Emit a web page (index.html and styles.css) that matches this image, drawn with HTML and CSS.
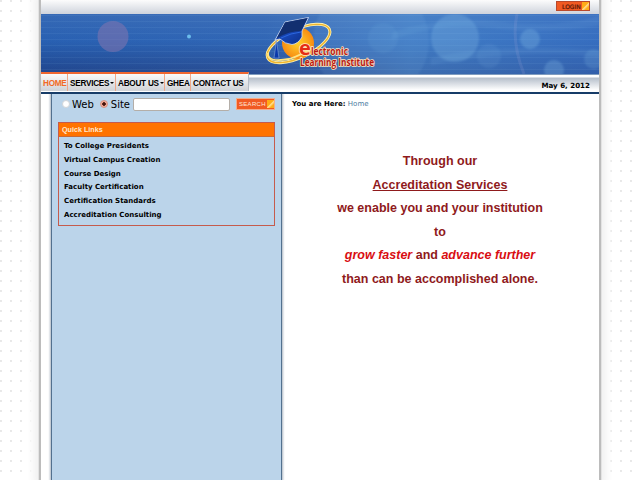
FILE: index.html
```
<!DOCTYPE html>
<html lang="en">
<head>
<meta charset="utf-8">
<title>Electronic Learning Institute</title>
<link rel="stylesheet" href="styles.css">
</head>
<body>
<div class="page">
  <header class="topbar"><a class="btn login"><span>LOGIN</span><i></i></a></header>
  <div class="banner">
    <svg viewBox="0 0 558 60" width="558" height="60">
      <defs>
        <linearGradient id="sky" x1="0" y1="0" x2="0" y2="1"><stop offset="0" stop-color="#3669b5"/><stop offset=".45" stop-color="#2860b2"/><stop offset="1" stop-color="#21458c"/></linearGradient>
        <linearGradient id="glow"><stop offset="0" stop-color="#6c93cd" stop-opacity="0"/><stop offset=".4" stop-color="#6c93cd" stop-opacity=".12"/><stop offset=".66" stop-color="#5d9ddc" stop-opacity=".45"/><stop offset="1" stop-color="#477ed0" stop-opacity=".45"/></linearGradient>
        <radialGradient id="gold"><stop offset="0" stop-color="#ffd22c"/><stop offset="1" stop-color="#f78b12"/></radialGradient>
        <linearGradient id="cap" x2="1" y2="1"><stop offset="0" stop-color="#0a2050"/><stop offset=".5" stop-color="#1746b5"/><stop offset="1" stop-color="#0b2a80"/></linearGradient>
        <filter id="soft"><feGaussianBlur stdDeviation=".8"/></filter>
        <pattern id="lines" width="8" height="6" patternUnits="userSpaceOnUse"><path d="M0 1.5h8" stroke="#9cc4ef" stroke-opacity=".08"/></pattern>
      </defs>
      <path fill="url(#sky)" d="M0 0h558v60H0z"/>
      <path fill="url(#glow)" d="M0 0h558v60H0z"/>
      <path fill="url(#lines)" d="M0 0h558v60H0z"/>
      <circle cx="72" cy="22.500" r="15.500" fill="#8374ae" fill-opacity=".55"/>
      <circle cx="148" cy="22.500" r="2" fill="#6bbcec"/>
      <g fill="#8ac3ea" fill-opacity=".1" filter="url(#soft)">
        <circle cx="330" cy="27" r="58"/><circle cx="342" cy="24" r="15"/>
        <circle cx="414" cy="24" r="24" fill-opacity=".25"/><circle cx="448" cy="42" r="12"/>
        <circle cx="489" cy="25" r="10" fill-opacity=".28"/><circle cx="513" cy="56" r="10" fill-opacity=".25"/>
        <circle cx="553" cy="45" r="10" fill-opacity=".18"/>
        <path d="M352 18Q400 2 460 8T558 2V12Q500 20 450 14T350 26zM390 44Q450 29 558 36V43Q480 34 390 51z"/>
      </g>
      <path d="M476 0Q470 28 483 60" fill="none" stroke="#aaa9dc" stroke-opacity=".16" stroke-width="3"/>
      <g>
        <ellipse cx="257.500" cy="29.500" rx="34" ry="14" transform="rotate(-25 257.500 29.500)" fill="none" stroke="#fff3b0" stroke-width="3"/>
        <ellipse cx="257.500" cy="29.500" rx="34" ry="14" transform="rotate(-25 257.500 29.500)" fill="none" stroke="#efb52f" stroke-width="1.400"/>
        <circle cx="257" cy="29" r="16" fill="url(#gold)"/>
        <path d="M234 26L244 8 267.500 3.500 261 17 261 23Q257 30 251 30.500Q244 30 239 25z" fill="url(#cap)" stroke="#d8e2f4" stroke-width=".8"/>
        <path d="M244 8.500L266.500 4 260 17Q248 17 236 24z" fill="#122f70"/>
        <path d="M240 24Q250 19 260 18" fill="none" stroke="#2c67df" stroke-width="1"/>
        <path d="M235 25l-.5 9-1.500 10h5l-1.500-10z" fill="#0b3aaa" stroke="#b6cdf4" stroke-width=".4"/>
        <path d="M227 39Q226 49 248 45Q261 41 272 33" fill="none" stroke="#ffe583" stroke-width="1.800"/>
        <g class="logo-text"><text class="logo-e" x="258" y="41">e</text><text x="270" y="41" textLength="37" lengthAdjust="spacingAndGlyphs">lectronic</text><text x="259" y="52" textLength="74" lengthAdjust="spacingAndGlyphs">Learning Institute</text></g>
      </g>
    </svg>
  </div>
  <div class="navbar">
    <nav class="nav"><a class="on">HOME</a><a class="drop n2">SERVICES</a><a class="drop n3">ABOUT US</a><a class="n4">GHEA</a><a class="n5">CONTACT US</a></nav>
    <span class="date">May 6, 2012</span>
  </div>
  <div class="body">
    <aside class="side">
      <div class="search"><i class="radio"></i><label>Web</label><i class="radio checked"></i><label>Site</label><div class="field"></div><a class="btn find"><span>SEARCH</span><i></i></a></div>
      <section class="links">
        <h2>Quick Links</h2>
        <ul><li>To College Presidents</li><li>Virtual Campus Creation</li><li>Course Design</li><li>Faculty Certification</li><li>Certification Standards</li><li>Accreditation Consulting</li></ul>
      </section>
    </aside>
    <main class="main">
      <div class="crumb"><b>You are Here:</b> <a>Home</a></div>
      <div class="pitch">
        <p>Through our</p><p><u>Accreditation Services</u></p><p>we enable you and your institution</p><p>to</p><p><em>grow faster</em> and <em>advance further</em></p><p>than can be accomplished alone.</p>
      </div>
    </main>
  </div>
</div>
</body>
</html>
```
FILE: styles.css
```
* { box-sizing: border-box; }
body {
  margin: 0;
  height: 480px;
  overflow: hidden;
  background: #fff radial-gradient(circle, #e8e8e8 0 .7px, transparent 1.1px) -4px -4px / 10px 10px;
  font-family: "DejaVu Sans", sans-serif;
  color: #000;
}
.page {
  width: 562px;
  height: 480px;
  margin-left: 39px;
  border: solid #bcbcbc;
  border-width: 0 2px;
  background: #fff;
  box-shadow: 0 0 0 1px #e3e3e3, 0 0 8px 5px #f0f0f0, 0 0 3px 9px #fff;
}
.topbar {
  display: flex;
  justify-content: flex-end;
  height: 14px;
  padding: 1px 9px 0 0;
  background: linear-gradient(#fcfcfc, #ced3dc);
}
.btn {
  display: flex;
  align-items: center;
  justify-content: space-between;
  background: #f15a22;
  border: 1px solid #b9492b;
}
.btn i {
  width: 7px;
  height: 8px;
  background: linear-gradient(135deg, #ffac16 45%, #ffe29a 55%, #ffac16 75%);
}
.login { width: 34px; height: 10px; padding-left: 5px; font: 6px "DejaVu Sans", sans-serif; color: #501508; -webkit-text-stroke: .2px #501508; }
.banner { height: 60px; border-bottom: 1px solid #20458a; }
.banner svg { display: block; }
.logo-text { font: bold 10.500px "Open Sans", sans-serif; fill: #b91813; stroke: #ffe8c0; stroke-width: 1.600px; paint-order: stroke; }
.logo-e { font-size: 20px; fill: #e52d14; }
.navbar {
  display: flex;
  justify-content: space-between;
  height: 21px;
  margin-top: -1px;
  border-bottom: 2px solid #173c68;
  background: linear-gradient(#7f9cbf 0 2px, #fff 2px 4px, #b6bfcb 5px, #fff 17px);
}
.nav {
  display: flex;
  width: 208px;
  height: 19px;
  margin-top: -1px;
  border-top: 2px solid #ef6731;
  border-right: 1px solid #b7bdc6;
  background: linear-gradient(#fafafa, #cfd2d7);
  font: bold 8.200px/19px "Liberation Sans", sans-serif;
  letter-spacing: -.25px;
  white-space: nowrap;
}
.nav a { display: block; height: 17px; padding-left: 2px; border-left: 1px solid #efa889; }
.nav .on { width: 26px; border: 0; color: #f26a24; }
.n2 { width: 48px; }
.n3 { width: 49px; }
.n4 { width: 26px; }
.drop::after { content: ""; display: inline-block; margin-left: 1px; vertical-align: 2px; border: solid transparent; border-width: 2px 2px 0; border-top-color: #000; }
.date { margin-right: 9px; font: bold 7.100px/25px "DejaVu Sans", sans-serif; }
.body { display: flex; height: 386px; }
.side {
  width: 231px;
  margin-left: 10px;
  padding: 3px 6px 0;
  border: solid #53718f;
  border-width: 0 1px;
  background: #bbd4ea;
  box-shadow: 0 0 2px 1px #aab4c0;
  clip-path: inset(0 -4px);
}
.search { display: flex; align-items: center; height: 14px; font-size: 10px; }
.radio { width: 8px; height: 8px; margin: 0 2px 0 4px; border: 1px solid #d0d4d8; border-radius: 50%; background: #fff; }
.checked { margin-left: 6px; margin-right: 3px; border-color: #d79180; background: radial-gradient(circle, #46130c 0 1.500px, #f3aa98 2px); }
.field { width: 97px; height: 13px; margin-left: 3px; border: 1px solid #b4aea8; border-radius: 2px; background: #fff; }
.find { width: 39px; height: 12px; margin-left: auto; padding-left: 2px; border-color: #f3ad8c; font: 6px "Liberation Sans", sans-serif; letter-spacing: .3px; color: #ffe8d8; }
.links { margin-top: 11px; height: 104px; border: 1px solid #c55b4c; }
.links h2 { height: 14px; margin: 0; padding-left: 3px; background: #ff7300; border-bottom: 1px solid #c86a35; font: bold 7.200px/13px "Liberation Sans", sans-serif; color: #ffe9cf; }
.links ul { margin: 0; padding: 3px 0 0 5px; list-style: none; font: bold 7px/13.750px "DejaVu Sans", sans-serif; }
.main { flex: 1; padding: 3px 0 0 10px; }
.crumb { font-size: 7px; line-height: 14px; }
.crumb a { color: #4d7d9f; }
.pitch { margin: 39px 11px 0 0; font: bold 12.500px/23.500px "Liberation Sans", sans-serif; color: #8f1a1c; text-align: center; }
.pitch p { margin: 0; }
.pitch em { color: #d90d12; }
```
